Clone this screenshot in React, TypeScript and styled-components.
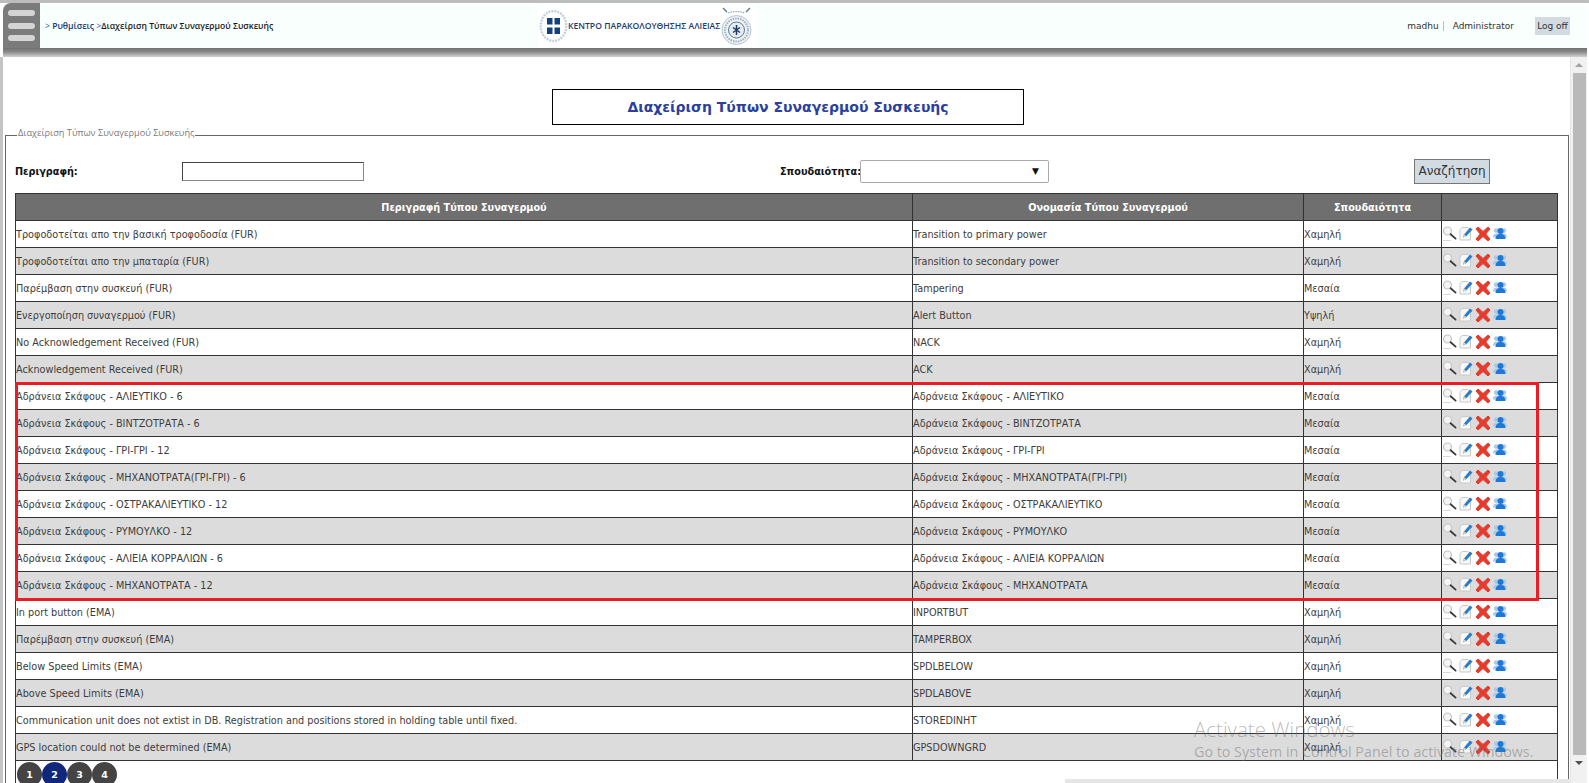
import * as React from 'react';
import styled, { createGlobalStyle } from 'styled-components';

const GlobalStyle = createGlobalStyle`
	html, body {
		margin: 0;
		padding: 0;
		height: 783px;
		overflow: hidden;
		background: #fff;
		font-family: "DejaVu Sans", Verdana, sans-serif;
	}
`;

const Page = styled.div`
	position: relative;
	width: 1589px;
	height: 783px;
	overflow: hidden;
	display: flex;
	flex-direction: column;
	border-top: 3px solid #bdbdbd;
	box-sizing: border-box;
	background: #fff;
`;

const TopBar = styled.header`
	display: flex;
	align-items: center;
	height: 45px;
	margin: 0 2px 0 3px;
	background: #f9fffd;
	flex: none;
`;

const TopShadow = styled.div`
	height: 9px;
	margin: 0 2px 0 3px;
	flex: none;
	background: linear-gradient(#707070, #8c8c8c 45%, #d2d2d2);
`;

const MenuButton = styled.button`
	width: 37px;
	height: 45px;
	padding: 7px 5px;
	border: none;
	border-radius: 8px 0 0 0;
	background: #7b7b7b;
	display: flex;
	flex-direction: column;
	justify-content: space-between;
	flex: none;
`;

const MenuBar = styled.span`
	display: block;
	height: 6px;
	border-radius: 3px;
	background: #d4d4d4;
`;

const Crumbs = styled.div`
	width: 493px;
	margin-left: 5px;
	font-family: "Open Sans", sans-serif;
	font-size: 8.6px;
	color: #2a4f9c;
	white-space: nowrap;
	flex: none;
`;

const CrumbLink = styled.span`
	color: #123a7c;
	font-weight: 600;
`;

const CrumbCurrent = styled.span`
	color: #1a1a1a;
	font-weight: 600;
`;

const Logo = styled.div`
	display: flex;
	align-items: center;
	width: 218px;
	height: 42px;
	padding-left: 1px;
	box-sizing: border-box;
	background: #fff;
	flex: none;
`;

const LogoText = styled.span`
	font-family: "Open Sans", sans-serif;
	font-size: 8.6px;
	font-weight: 600;
	color: #1d3d6e;
	white-space: nowrap;
	width: 152px;
	flex: none;
`;

const UserArea = styled.div`
	margin-left: auto;
	display: flex;
	align-items: center;
	font-size: 9px;
	color: #333;
	padding-right: 17px;
`;

const UserName = styled.span`
	padding-right: 4px;
	border-right: 1px solid #9cc;
	margin-right: 9px;
`;

const LogOff = styled.span`
	margin-left: 21px;
	padding: 4px 2px;
	width: 31px;
	text-align: center;
	background: #d3dbe2;
`;

const Body = styled.div`
	flex: 1;
	display: flex;
	min-height: 0;
	border-left: 3px solid #c4c4c4;
	box-sizing: border-box;
`;

const Main = styled.main`
	flex: 1;
	min-width: 0;
	padding: 0 1px 0 2px;
	overflow: hidden;
`;

const TitleBox = styled.h1`
	width: 470px;
	height: 34px;
	margin: 32px 0 0 547px;
	border: 1px solid #000;
	display: flex;
	align-items: center;
	justify-content: center;
	font-size: 14px;
	font-weight: bold;
	color: #2b3f9e;
`;

const FieldSet = styled.fieldset`
	margin: 2px 0 0 0;
	padding: 0 10px 0 9px;
	border: 1px solid #666;
	border-bottom: none;
	height: 662px;
	box-sizing: border-box;
`;

const Legend = styled.legend`
	margin-left: 2px;
	padding: 0 1px 4px;
	font-family: "Open Sans", sans-serif;
	font-size: 9.2px;
	line-height: 12px;
	color: #7a7a7a;
`;

const SearchForm = styled.form`
	display: flex;
	align-items: center;
	height: 28px;
	margin-top: 14px;
`;

const FieldLabel = styled.label<{ $width: number }>`
	width: ${p => p.$width}px;
	font-size: 9.7px;
	font-weight: bold;
	color: #111;
	flex: none;
`;

const TextInput = styled.input`
	width: 182px;
	height: 19px;
	box-sizing: border-box;
	border: 1px solid #444;
	border-bottom-color: #888;
	border-right-color: #888;
	padding: 0;
	background: #fff;
	flex: none;
`;

const Gap = styled.span<{ $width: number }>`
	width: ${p => p.$width}px;
	flex: none;
`;

const SelectBox = styled.div`
	width: 189px;
	height: 23px;
	box-sizing: border-box;
	border: 1px solid #aaa;
	border-radius: 2px;
	display: flex;
	align-items: center;
	justify-content: flex-end;
	padding-right: 9px;
	font-size: 9px;
	color: #111;
	flex: none;
`;

const SearchButton = styled.button`
	width: 76px;
	height: 25px;
	box-sizing: border-box;
	border: 1px solid #777;
	background: #d3dbe2;
	font-family: "DejaVu Sans", sans-serif;
	font-size: 12px;
	color: #333;
	padding: 0;
	flex: none;
`;

const TableWrap = styled.div`
	margin-top: 8px;
	width: 1543px;
	height: 600px;
	box-sizing: border-box;
	border-left: 1px solid #333;
	border-right: 1px solid #333;
`;

const AlarmTable = styled.table`
	width: 1543px;
	margin-left: -1px;
	border-collapse: collapse;
	table-layout: fixed;
`;

const HeadCell = styled.th<{ $width?: number }>`
	${p => (p.$width ? `width: ${p.$width}px;` : '')}
	height: 27px;
	box-sizing: border-box;
	padding: 0;
	background: #6f6f6f;
	border: 1px solid #333;
	color: #fff;
	font-size: 9.7px;
	font-weight: bold;
	text-align: center;
`;

const Row = styled.tr<{ $shaded: boolean }>`
	background: ${p => (p.$shaded ? '#dcdcdc' : '#fff')};
`;

const Cell = styled.td`
	height: 27px;
	padding: 0;
	box-sizing: border-box;
	border: 1px solid #333;
	font-size: 9.7px;
	color: #3c3c3c;
	white-space: nowrap;
	overflow: hidden;
`;

const ActionCell = styled(Cell)`
	padding: 0 0 1px 0;
`;

const Actions = styled.div`
	display: flex;
	align-items: center;
	gap: 2px;
`;

const Pager = styled.nav`
	display: flex;
	margin: 1px 0 0 1px;
`;

const PageDot = styled.span<{ $active?: boolean }>`
	width: 25px;
	height: 25px;
	border-radius: 50%;
	background: ${p => (p.$active ? '#10277c' : '#444')};
	color: #fff;
	font-size: 9.5px;
	font-weight: bold;
	display: flex;
	align-items: center;
	justify-content: center;
	flex: none;
`;

const ScrollTrack = styled.div`
	width: 17px;
	margin-right: 2px;
	background: #f1f1f1;
	display: flex;
	flex-direction: column;
	align-items: center;
	flex: none;
	border-left: 1px solid #e6e6e6;
	box-sizing: border-box;
`;

const ScrollArrow = styled.span<{ $down?: boolean }>`
	width: 0;
	height: 0;
	margin: 6px 0;
	border-left: 4px solid transparent;
	border-right: 4px solid transparent;
	${p => (p.$down ? 'border-top: 4px solid #505050;' : 'border-bottom: 4px solid #a3a3a3;')}
	flex: none;
`;

const ScrollThumb = styled.span`
	width: 13px;
	height: 682px;
	background: #b9b9b9;
	flex: none;
`;

const HScrollEdge = styled.div`
	position: absolute;
	left: 1065px;
	right: 19px;
	bottom: 0;
	height: 4px;
	background: #e6e6e6;
`;

const Highlight = styled.div`
	position: absolute;
	left: 15px;
	top: 379px;
	width: 1524px;
	height: 219px;
	box-sizing: border-box;
	border: 3px solid #ed1c24;
	pointer-events: none;
`;

const Watermark = styled.div`
	position: absolute;
	left: 1194px;
	top: 713px;
	font-family: "Open Sans", sans-serif;
	color: rgba(110, 110, 110, 0.48);
	pointer-events: none;
	white-space: nowrap;
`;

const WatermarkTitle = styled.div`
	font-size: 20.5px;
	font-weight: 300;
	line-height: 26px;
`;

const WatermarkText = styled.div`
	font-size: 14.3px;
	line-height: 20px;
`;

function GreekEmblem() {
	return (
		<svg width="29" height="36" viewBox="0 0 29 36">
			<ellipse cx="14.5" cy="18" rx="12.8" ry="15" fill="none" stroke="#c3d0da" strokeWidth="2.4" strokeDasharray="2 1" />
			<rect x="7" y="9" width="15" height="18" rx="1" fill="#fff" />
			<rect x="8" y="10" width="5.5" height="6.5" fill="#13407f" />
			<rect x="15.5" y="10" width="5.5" height="6.5" fill="#13407f" />
			<rect x="8" y="19.5" width="5.5" height="6.5" fill="#13407f" />
			<rect x="15.5" y="19.5" width="5.5" height="6.5" fill="#13407f" />
		</svg>
	);
}

function CoastGuardSeal() {
	return (
		<svg width="33" height="38" viewBox="0 0 33 38">
			<path d="M3 1 L7 5 M30 1 L26 5" stroke="#5a7493" strokeWidth="1.4" />
			<path d="M8 6 Q16.5 3 25 6" fill="none" stroke="#8fa4b8" strokeWidth="1.2" strokeDasharray="1.5 1" />
			<circle cx="16.5" cy="23" r="14.5" fill="#eef2f5" stroke="#b7c6d2" strokeWidth="1" />
			<circle cx="16.5" cy="23" r="11.5" fill="none" stroke="#9fb1c1" strokeWidth="2" strokeDasharray="1.5 1" />
			<circle cx="16.5" cy="23" r="8" fill="#e6ecf1" stroke="#5b7896" strokeWidth="1" />
			<path d="M16.5 18 V28 M13 20.5 L20 25.5 M20 20.5 L13 25.5" stroke="#1c3a63" strokeWidth="1.5" />
		</svg>
	);
}

function SearchIcon() {
	return (
		<svg width="15" height="17" viewBox="0 0 15 17">
			<circle cx="5.5" cy="6" r="4" fill="#f4f4f4" stroke="#c4c4c4" strokeWidth="1.2" />
			<path d="M8.6 9.2 L13.6 13.6" stroke="#3a3a3a" strokeWidth="1.8" strokeLinecap="round" />
			<path d="M1 15.5 H9" stroke="#d8d8d8" strokeWidth="1" />
		</svg>
	);
}

function EditIcon() {
	return (
		<svg width="14" height="17" viewBox="0 0 14 17">
			<path d="M3 2.5 H9 L11.5 5 V15 H1 V5 Z" fill="#f8f8f8" stroke="#c9c9c9" strokeWidth="1" />
			<path d="M4 12.5 L5 9.5 L11 2.5 L13.5 4.5 L7.5 11 Z" fill="#2a7cc9" />
			<path d="M4 12.5 L5 9.5 L7.5 11 Z" fill="#e3d6b0" />
		</svg>
	);
}

function DeleteIcon() {
	return (
		<svg width="16" height="16" viewBox="0 0 16 16">
			<path d="M1 3 L3 1 L8 5.4 L13 1 L15 3 L10.8 8 L15 13 L13 15 L8 10.6 L3 15 L1 13 L5.2 8 Z" fill="#e33b2e" stroke="#e33b2e" strokeWidth="1" strokeLinejoin="round" />
		</svg>
	);
}

function UsersIcon() {
	return (
		<svg width="14" height="13" viewBox="0 0 14 13">
			<circle cx="3.2" cy="3.6" r="2.4" fill="#a9cbea" />
			<circle cx="10.8" cy="3.6" r="2.4" fill="#a9cbea" />
			<path d="M0 10.5 C0 7.5 2 6.6 3.4 6.6 L10.6 6.6 C12 6.6 14 7.5 14 10.5 Z" fill="#a9cbea" />
			<circle cx="7.5" cy="4" r="3" fill="#1f78d6" />
			<path d="M2.5 12 C2.5 8 5 7 7.5 7 C10 7 12.5 8 12.5 12 Z" fill="#1f78d6" />
		</svg>
	);
}

const rows: [string, string, string][] = [
	['Τροφοδοτείται απο την βασική τροφοδοσία (FUR)', 'Transition to primary power', 'Χαμηλή'],
	['Τροφοδοτείται απο την μπαταρία (FUR)', 'Transition to secondary power', 'Χαμηλή'],
	['Παρέμβαση στην συσκευή (FUR)', 'Tampering', 'Μεσαία'],
	['Ενεργοποίηση συναγερμού (FUR)', 'Alert Button', 'Υψηλή'],
	['No Acknowledgement Received (FUR)', 'NACK', 'Χαμηλή'],
	['Acknowledgement Received (FUR)', 'ACK', 'Χαμηλή'],
	['Αδράνεια Σκάφους - ΑΛΙΕΥΤΙΚΟ - 6', 'Αδράνεια Σκάφους - ΑΛΙΕΥΤΙΚΟ', 'Μεσαία'],
	['Αδράνεια Σκάφους - ΒΙΝΤΖΟΤΡΑΤΑ - 6', 'Αδράνεια Σκάφους - ΒΙΝΤΖΟΤΡΑΤΑ', 'Μεσαία'],
	['Αδράνεια Σκάφους - ΓΡΙ-ΓΡΙ - 12', 'Αδράνεια Σκάφους - ΓΡΙ-ΓΡΙ', 'Μεσαία'],
	['Αδράνεια Σκάφους - ΜΗΧΑΝΟΤΡΑΤΑ(ΓΡΙ-ΓΡΙ) - 6', 'Αδράνεια Σκάφους - ΜΗΧΑΝΟΤΡΑΤΑ(ΓΡΙ-ΓΡΙ)', 'Μεσαία'],
	['Αδράνεια Σκάφους - ΟΣΤΡΑΚΑΛΙΕΥΤΙΚΟ - 12', 'Αδράνεια Σκάφους - ΟΣΤΡΑΚΑΛΙΕΥΤΙΚΟ', 'Μεσαία'],
	['Αδράνεια Σκάφους - ΡΥΜΟΥΛΚΟ - 12', 'Αδράνεια Σκάφους - ΡΥΜΟΥΛΚΟ', 'Μεσαία'],
	['Αδράνεια Σκάφους - ΑΛΙΕΙΑ ΚΟΡΡΑΛΙΩΝ - 6', 'Αδράνεια Σκάφους - ΑΛΙΕΙΑ ΚΟΡΡΑΛΙΩΝ', 'Μεσαία'],
	['Αδράνεια Σκάφους - ΜΗΧΑΝΟΤΡΑΤΑ - 12', 'Αδράνεια Σκάφους - ΜΗΧΑΝΟΤΡΑΤΑ', 'Μεσαία'],
	['In port button (EMA)', 'INPORTBUT', 'Χαμηλή'],
	['Παρέμβαση στην συσκευή (EMA)', 'TAMPERBOX', 'Χαμηλή'],
	['Below Speed Limits (EMA)', 'SPDLBELOW', 'Χαμηλή'],
	['Above Speed Limits (EMA)', 'SPDLABOVE', 'Χαμηλή'],
	['Communication unit does not extist in DB. Registration and positions stored in holding table until fixed.', 'STOREDINHT', 'Χαμηλή'],
	['GPS location could not be determined (EMA)', 'GPSDOWNGRD', 'Χαμηλή'],
];

export default function App() {
	return (
		<Page>
			<GlobalStyle />
			<TopBar>
				<MenuButton aria-label="menu">
					<MenuBar />
					<MenuBar />
					<MenuBar />
				</MenuButton>
				<Crumbs>
					&gt; <CrumbLink>Ρυθμίσεις</CrumbLink> &gt;<CrumbCurrent>Διαχείριση Τύπων Συναγερμού Συσκευής</CrumbCurrent>
				</Crumbs>
				<Logo>
					<GreekEmblem />
					<LogoText>ΚΕΝΤΡΟ ΠΑΡΑΚΟΛΟΥΘΗΣΗΣ ΑΛΙΕΙΑΣ</LogoText>
					<CoastGuardSeal />
				</Logo>
				<UserArea>
					<UserName>madhu</UserName>
					<span>Administrator</span>
					<LogOff>Log off</LogOff>
				</UserArea>
			</TopBar>
			<TopShadow />
			<Body>
				<Main>
					<TitleBox>Διαχείριση Τύπων Συναγερμού Συσκευής</TitleBox>
					<FieldSet>
						<Legend>Διαχείριση Τύπων Συναγερμού Συσκευής</Legend>
						<SearchForm>
							<FieldLabel $width={167}>Περιγραφή:</FieldLabel>
							<TextInput />
							<Gap $width={416} />
							<FieldLabel $width={80}>Σπουδαιότητα:</FieldLabel>
							<SelectBox>▼</SelectBox>
							<Gap $width={365} />
							<SearchButton type="button">Αναζήτηση</SearchButton>
						</SearchForm>
						<TableWrap>
							<AlarmTable>
								<thead>
									<tr>
										<HeadCell $width={897}>Περιγραφή Τύπου Συναγερμού</HeadCell>
										<HeadCell $width={391}>Ονομασία Τύπου Συναγερμού</HeadCell>
										<HeadCell $width={138}>Σπουδαιότητα</HeadCell>
										<HeadCell />
									</tr>
								</thead>
								<tbody>
									{rows.map((row, index) => (
										<Row key={row[0]} $shaded={index % 2 === 1}>
											<Cell>{row[0]}</Cell>
											<Cell>{row[1]}</Cell>
											<Cell>{row[2]}</Cell>
											<ActionCell>
												<Actions>
													<SearchIcon />
													<EditIcon />
													<DeleteIcon />
													<UsersIcon />
												</Actions>
											</ActionCell>
										</Row>
									))}
								</tbody>
							</AlarmTable>
							<Pager>
								<PageDot>1</PageDot>
								<PageDot $active>2</PageDot>
								<PageDot>3</PageDot>
								<PageDot>4</PageDot>
							</Pager>
						</TableWrap>
					</FieldSet>
				</Main>
				<ScrollTrack>
					<ScrollArrow />
					<ScrollThumb />
					<ScrollArrow $down />
				</ScrollTrack>
			</Body>
			<HScrollEdge />
			<Highlight />
			<Watermark>
				<WatermarkTitle>Activate Windows</WatermarkTitle>
				<WatermarkText>Go to System in Control Panel to activate Windows.</WatermarkText>
			</Watermark>
		</Page>
	);
}
